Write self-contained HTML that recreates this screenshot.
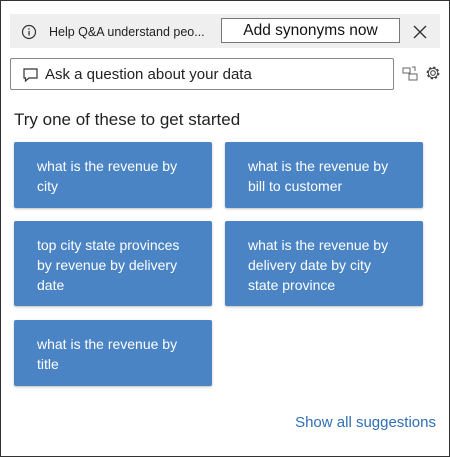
<!DOCTYPE html><html><head><style>
body{margin:0;width:450px;height:457px;overflow:hidden;font-family:"Liberation Sans",sans-serif;background:#fff}
.f{position:absolute;left:0;top:0;width:448px;height:455px;border:1px solid #333}
.a{position:absolute}
.t{position:absolute;background:#4a84c4;color:#fff;font-size:14px;line-height:20px;box-sizing:border-box;padding:14px 20px 0 23px;border-radius:2px;box-shadow:0 1px 2px rgba(0,0,0,.25)}
</style></head><body><div class="f"></div>
<div class="a" style="left:10px;top:14px;width:430px;height:34px;background:#efefef"></div>
<svg class="a" style="left:21px;top:24px" width="16" height="16"><circle cx="8" cy="8" r="6.5" fill="none" stroke="#333" stroke-width="1.2"/><rect x="7.4" y="7" width="1.3" height="4.5" fill="#333"/><circle cx="8" cy="5" r=".8" fill="#333"/></svg>
<div class="a" style="left:49px;top:25px;font-size:12.5px;color:#222">Help Q&amp;A understand peo...</div>
<div class="a" style="left:221px;top:18px;width:179px;height:25px;border:1px solid #777;background:#fff;box-sizing:border-box;text-align:center;font-size:15.5px;line-height:24px;color:#111">Add synonyms now</div>
<svg class="a" style="left:413px;top:25px" width="14" height="14"><path d="M1 1L13 13M13 1L1 13" stroke="#333" stroke-width="1.4"/></svg>
<div class="a" style="left:10px;top:58px;width:384px;height:32px;border:1px solid #888;box-sizing:border-box;border-radius:2px"></div>
<svg class="a" style="left:23px;top:68px" width="16" height="15"><path d="M1 1H14V10H6L2.5 13V10H1Z" fill="none" stroke="#333" stroke-width="1.2"/></svg>
<div class="a" style="left:45px;top:66px;font-size:15px;color:#222">Ask a question about your data</div>
<svg class="a" style="left:402px;top:65px" width="16" height="16"><rect x="1" y="3" width="7" height="5" fill="none" stroke="#666"/><rect x="7" y="9" width="8" height="6" fill="none" stroke="#666"/><path d="M10 2H13V6" fill="none" stroke="#666"/></svg>
<svg class="a" style="left:425px;top:65px" width="16" height="16"><circle cx="8" cy="8" r="2.3" fill="none" stroke="#444" stroke-width="1.1"/><circle cx="8" cy="8" r="5.3" fill="none" stroke="#444" stroke-width="2.2" stroke-dasharray="2.1 2.06"/><circle cx="8" cy="8" r="4.8" fill="none" stroke="#444" stroke-width="1"/></svg>
<div class="a" style="left:14px;top:110px;font-size:17px;color:#222">Try one of these to get started</div>
<div class="t" style="left:14px;top:142px;width:198px;height:66px">what is the revenue by city</div>
<div class="t" style="left:225px;top:142px;width:198px;height:66px">what is the revenue by bill to customer</div>
<div class="t" style="left:14px;top:221px;width:198px;height:85px">top city state provinces by revenue by delivery date</div>
<div class="t" style="left:225px;top:221px;width:198px;height:85px">what is the revenue by delivery date by city state province</div>
<div class="t" style="left:14px;top:320px;width:198px;height:66px">what is the revenue by title</div>
<div class="a" style="right:14px;top:414px;font-size:15px;color:#2f6fb5">Show all suggestions</div>
</body></html>
